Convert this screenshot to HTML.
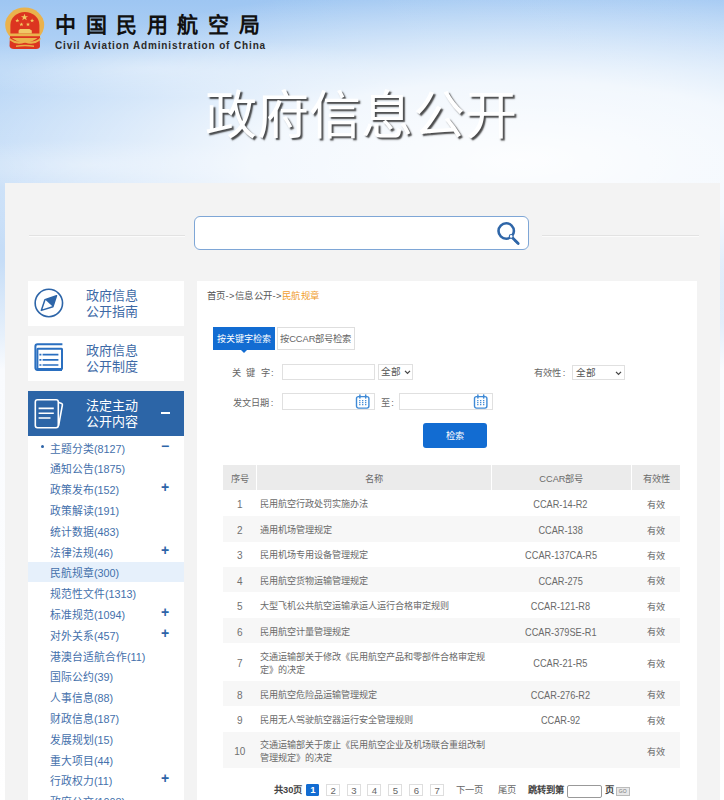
<!DOCTYPE html>
<html lang="zh-CN">
<head>
<meta charset="utf-8">
<style>
*{margin:0;padding:0;box-sizing:border-box}
html,body{width:724px;height:800px;overflow:hidden}
body{position:relative;font-family:"Liberation Sans",sans-serif;color:#555;
background:
 radial-gradient(ellipse 600px 175px at 520px 160px, rgba(255,255,255,0.96) 0%, rgba(255,255,255,0.8) 45%, rgba(255,255,255,0) 100%),
 radial-gradient(ellipse 260px 30px at 150px 68px, rgba(255,255,255,0.35) 0%, rgba(255,255,255,0) 100%),
 radial-gradient(ellipse 200px 25px at 90px 165px, rgba(255,255,255,0.3) 0%, rgba(255,255,255,0) 100%),
 linear-gradient(to right, rgba(255,255,255,0) 0%, rgba(255,255,255,0) 30%, rgba(255,255,255,0.08) 100%),
 linear-gradient(to bottom, #9ec6f2 0px, #b8d6f6 70px, #c2dbf7 183px, #c6ddf7 260px, #e6f0fb 335px, #f9fbfe 370px, #ffffff 800px);}
.abs{position:absolute}
#cn{left:55px;top:10px;font-size:21px;font-weight:bold;color:#111;letter-spacing:9.6px;line-height:30px;white-space:nowrap}
#en{left:55px;top:38.5px;font-size:10px;font-weight:bold;color:#2a2a2a;letter-spacing:0.86px;line-height:14px;white-space:nowrap}
#bigtitle{left:205px;top:80.5px;font-size:52px;font-weight:300;color:#fff;line-height:70px;white-space:nowrap;
 text-shadow:1.5px 2px 1.5px rgba(30,30,30,0.8)}
#wrap{left:5px;top:183px;width:714.6px;height:640px;background:#f3f3f3}
.hline{height:1px;background:#e2e2e2;box-shadow:0 1px 0 #fbfbfb}
#search{left:194px;top:215.8px;width:334.5px;height:34px;border:1.3px solid #7ea6d6;border-radius:6px;background:#fff}
.side{left:28px;width:156px;height:45px;background:#fff}
.side .t{position:absolute;left:58px;top:7.3px;font-size:13px;line-height:15.6px;color:#3d69a6;white-space:nowrap}
#side3{background:#2c65a7}
#side3 .t{color:#fff}
#list{left:28px;top:436px;width:156px;height:380px;background:#fff}
.li{position:absolute;left:22px;height:20.8px;line-height:25px;font-size:10.8px;color:#4470ab;white-space:nowrap}
.pl{position:absolute;left:133px;font-size:14px;font-weight:bold;color:#2d64a8;line-height:19.2px}
#hl{position:absolute;left:0;top:125.5px;width:156px;height:20.8px;background:#e6f0fb}
#main{left:196.6px;top:281px;width:500.6px;height:540px;background:#fff}
#crumb{left:206.6px;top:289px;font-size:9.4px;letter-spacing:0.4px;line-height:13px;color:#555;white-space:nowrap}
#tab1{left:212.7px;top:327px;width:62.6px;height:22.8px;background:#126cd2;color:#fff;font-size:9px;line-height:25.5px;text-align:center;white-space:nowrap}
#tab1arr{left:241.3px;top:349.8px;width:0;height:0;border-left:3px solid transparent;border-right:3px solid transparent;border-top:3px solid #126cd2}
#tab2{left:276.8px;top:327px;width:78px;height:22.8px;border:1px solid #dedede;color:#666;font-size:9.3px;line-height:23.5px;text-align:center;white-space:nowrap}
.lbl{font-size:9.2px;line-height:14px;color:#666;white-space:nowrap}
.inp{border:1px solid #e0e0e0;background:#fff}
.sel{font-size:9.6px;line-height:14px;color:#555;padding-left:2.5px}
#btn{left:423.4px;top:422.7px;width:63.8px;height:25px;border-radius:3px;background:#126cd2;color:#fff;font-size:9.2px;line-height:26.5px;text-align:center}
#thead{left:223.3px;top:464.7px;width:457.2px;height:25.7px;background:#ebebeb;font-size:9.2px;color:#6a6a6a;line-height:28.6px}
#thead>div,.tr>div{position:absolute;top:0;height:100%;text-align:center}
#thead .c1,#thead .c2,#thead .c3{border-left:1px solid #fff}
.c0{left:0;width:32.8px}.c1{left:32.8px;width:235px}.c2{left:267.8px;width:139.6px}.c3{left:407.4px;width:49.8px}
.tr{left:223.3px;width:457.2px;font-size:9.1px;color:#6a6a6a}
.tr>div{display:flex;align-items:center;justify-content:center;padding-top:3px}
.tr>.c0{font-size:10px;color:#707070}
.tr>.c2{font-size:11px;color:#6a6a6a;padding-top:2px}
.cc{display:inline-block;transform:scaleX(0.835)}
.tr>.c3{padding-top:1.5px}
.tr>.c1{justify-content:flex-start;text-align:left;padding-left:4px;padding-right:4px;line-height:12.8px}
.pg{font-size:9.3px;line-height:14px;color:#666;white-space:nowrap}
.pbox{top:783.9px;width:14px;height:12.6px;border:1px solid #dedede;font-size:9.6px;line-height:11.6px;text-align:center;color:#666}
.pbox.cur{background:#126cd2;border-color:#126cd2;color:#fff;font-weight:bold;width:13px;top:784.4px;height:11.2px;line-height:10.6px;border-radius:1px}
</style>
</head>
<body>
<!-- emblem -->
<svg class="abs" id="emblem" style="left:0;top:0;width:50px;height:50px" viewBox="0 0 50 50">
 <path d="M10 36 L9.5 46 Q10 49 14 49 L36 49 Q40 49 40 46 L39.5 36 Z" fill="#dc3520"/>
 <ellipse cx="24.7" cy="25" rx="19.5" ry="17.5" fill="#eab24c"/>
 <path d="M10.4 25 A14.5 13 0 0 1 39.4 25 L39.4 34.5 L10.4 34.5 Z" fill="#dc3520"/>
 <path d="M18.6 33.5 L18.6 30.5 L20 29 L29.5 29 L31.8 30.5 L31.8 33.5 Z" fill="#f0c868"/>
 <rect x="10" y="33.5" width="30" height="2.8" fill="#eab24c"/>
 <path d="M10 36.2 L40 36.2 L40 38 L10 38 Z" fill="#dc3520"/>
 <path d="M9 37.5 Q17 44 25 40 Q33 44 41 37.5 L40 40.5 Q33 46 25 42.5 Q17 46 10 40.5 Z" fill="#eab24c"/>
 <path d="M16 45.5 Q25 44 34 45.5 L34 47 Q25 45.5 16 47 Z" fill="#e9b048"/>
 <path d="M24.5 13.8 l0.95 2.4 h2.6 l-2.1 1.6 0.8 2.5 -2.25 -1.55 -2.25 1.55 0.8 -2.5 -2.1 -1.6 h2.6z" fill="#f3c860"/>
 <path d="M17.3 18.6 l0.6 1.4 h1.4 l-1.1 0.9 0.45 1.45 -1.35 -0.9 -1.35 0.9 0.45 -1.45 -1.1 -0.9 h1.4z" fill="#f3c860"/>
 <path d="M32.1 18.6 l0.6 1.4 h1.4 l-1.1 0.9 0.45 1.45 -1.35 -0.9 -1.35 0.9 0.45 -1.45 -1.1 -0.9 h1.4z" fill="#f3c860"/>
 <path d="M21.4 22.4 l0.6 1.4 h1.4 l-1.1 0.9 0.45 1.45 -1.35 -0.9 -1.35 0.9 0.45 -1.45 -1.1 -0.9 h1.4z" fill="#f3c860"/>
 <path d="M28 22.4 l0.6 1.4 h1.4 l-1.1 0.9 0.45 1.45 -1.35 -0.9 -1.35 0.9 0.45 -1.45 -1.1 -0.9 h1.4z" fill="#f3c860"/>
</svg>
<div class="abs" id="cn">中国民用航空局</div>
<div class="abs" id="en">Civil Aviation Administration of China</div>
<div class="abs" id="bigtitle">政府信息公开</div>

<div class="abs" id="wrap"></div>
<div class="abs hline" style="left:29px;top:235px;width:156px"></div>
<div class="abs hline" style="left:541.5px;top:235px;width:157px"></div>
<div class="abs" id="search"></div>
<svg class="abs" style="left:494px;top:218px;width:30px;height:30px" viewBox="0 0 30 30">
 <circle cx="12.2" cy="13" r="7.7" stroke="#2f66a8" stroke-width="2.6" fill="none"/>
 <path d="M17.2 18.6 L24.2 25.4" stroke="#2f66a8" stroke-width="2.8" stroke-linecap="round"/>
 <path d="M20.5 23.5 l1.6 -1.6 M22 25 l1.6 -1.6" stroke="#2f66a8" stroke-width="1.6"/>
 <circle cx="17.2" cy="18.4" r="1.9" fill="#fff" stroke="#2f66a8" stroke-width="1.1"/>
</svg>

<!-- sidebar -->
<div class="abs side" style="top:281px">
 <svg style="position:absolute;left:5px;top:6px;width:32px;height:32px" viewBox="0 0 32 32">
  <circle cx="15.85" cy="16" r="13.7" stroke="#2d65a8" stroke-width="1.6" fill="none"/>
  <path d="M23.5 8.7 L12 12.6 L8.3 23.4 L19.9 19.7 Z" fill="none" stroke="#2d65a8" stroke-width="1.5" stroke-linejoin="round"/>
  <path d="M23.5 8.7 L12 12.6 L19.9 19.7 Z" fill="#2d65a8"/>
 </svg>
 <div class="t">政府信息<br>公开指南</div>
</div>
<div class="abs side" style="top:336px">
 <svg style="position:absolute;left:5px;top:6px;width:32px;height:32px" viewBox="0 0 32 32">
  <path d="M29.4 2.3 H4.5 Q2.4 2.3 2.4 4.5 V25.8 Q2.4 27.9 4.5 27.9 H29" fill="none" stroke="#2a6fc0" stroke-width="2"/>
  <rect x="4.4" y="6.8" width="24.6" height="20.2" rx="0.5" fill="none" stroke="#2a6fc0" stroke-width="2"/>
  <path d="M6.4 12.6 h2 M9.6 12.6 h15.8 M6.4 17.9 h2 M9.6 17.9 h15.8 M6.4 23 h2 M9.6 23 h15.8" stroke="#2a6fc0" stroke-width="1.7"/>
 </svg>
 <div class="t">政府信息<br>公开制度</div>
</div>
<div class="abs side" id="side3" style="top:391px">
 <svg style="position:absolute;left:5px;top:6px;width:32px;height:32px" viewBox="0 0 32 32">
  <rect x="2.3" y="2.7" width="23" height="28" rx="2.2" fill="none" stroke="#fff" stroke-width="1.6"/>
  <path d="M25.3 5.2 L28.6 6.4 Q29.6 6.8 29.4 7.8 L25.6 28.6" fill="none" stroke="#fff" stroke-width="1.6"/>
  <path d="M5.6 11.4 h15.2 M5.6 16.2 h15.2 M5.6 21 h11.9" stroke="#fff" stroke-width="1.6"/>
 </svg>
 <div class="t">法定主动<br>公开内容</div>
 <div style="position:absolute;left:133px;top:20.5px;width:8.6px;height:2px;background:#fff"></div>
</div>

<div class="abs" id="list">
 <div id="hl"></div>
 <div style="position:absolute;left:12.8px;top:9.3px;width:3.2px;height:3.2px;border-radius:50%;background:#2d64a8"></div>
 <div class="li" style="top:0.6px">主题分类(8127)</div>
 <div class="pl" style="top:0.6px">−</div>
 <div class="li" style="top:21.4px">通知公告(1875)</div>
 <div class="li" style="top:42.2px">政策发布(152)</div>
 <div class="pl" style="top:42.2px">+</div>
 <div class="li" style="top:63px">政策解读(191)</div>
 <div class="li" style="top:83.8px">统计数据(483)</div>
 <div class="li" style="top:104.6px">法律法规(46)</div>
 <div class="pl" style="top:104.6px">+</div>
 <div class="li" style="top:125.4px">民航规章(300)</div>
 <div class="li" style="top:146.2px">规范性文件(1313)</div>
 <div class="li" style="top:167px">标准规范(1094)</div>
 <div class="pl" style="top:167px">+</div>
 <div class="li" style="top:187.8px">对外关系(457)</div>
 <div class="pl" style="top:187.8px">+</div>
 <div class="li" style="top:208.6px">港澳台适航合作(11)</div>
 <div class="li" style="top:229.4px">国际公约(39)</div>
 <div class="li" style="top:250.2px">人事信息(88)</div>
 <div class="li" style="top:271px">财政信息(187)</div>
 <div class="li" style="top:291.8px">发展规划(15)</div>
 <div class="li" style="top:312.6px">重大项目(44)</div>
 <div class="li" style="top:333.4px">行政权力(11)</div>
 <div class="pl" style="top:333.4px">+</div>
 <div class="li" style="top:354.2px">政府公文(1008)</div>
</div>

<div class="abs" id="main"></div>
<div class="abs" id="crumb">首页-&gt;信息公开-&gt;<span style="color:#f0a030">民航规章</span></div>
<div class="abs" id="tab1">按关键字检索</div>
<div class="abs" id="tab1arr"></div>
<div class="abs" id="tab2">按CCAR部号检索</div>
<div class="abs lbl" style="left:231.9px;top:366px"><span style="letter-spacing:5.3px">关键</span>字<span style="margin-left:1.5px">:</span></div>
<div class="abs inp" style="left:281.6px;top:363.5px;width:93.4px;height:16px"></div>
<div class="abs inp sel" style="left:377.8px;top:363.5px;width:35px;height:16px">全部<svg viewBox="0 0 8 6" style="position:absolute;left:25px;top:5.5px;width:7px;height:5px"><path d="M1 1 L4 4 L7 1" stroke="#444" stroke-width="1.5" fill="none"/></svg></div>
<div class="abs lbl" style="left:534.3px;top:366px">有效性<span style="margin-left:1.5px">:</span></div>
<div class="abs inp sel" style="left:572.2px;top:364.7px;width:53px;height:15px">全部<svg viewBox="0 0 8 6" style="position:absolute;left:42px;top:5px;width:7px;height:5px"><path d="M1 1 L4 4 L7 1" stroke="#444" stroke-width="1.5" fill="none"/></svg></div>
<div class="abs lbl" style="left:233.3px;top:396px">发文日期<span style="margin-left:1.5px">:</span></div>
<div class="abs inp" style="left:281.6px;top:393px;width:93.4px;height:16.8px"></div>
<div class="abs lbl" style="left:380.8px;top:396px">至<span style="margin-left:1.5px">:</span></div>
<div class="abs inp" style="left:399px;top:393px;width:94px;height:16.8px"></div>
<svg class="abs" style="left:354.8px;top:394px;width:15px;height:15px" viewBox="0 0 15 15"><rect x="1.5" y="2.6" width="12.4" height="11.5" rx="2" fill="#fff" stroke="#3f8ad6" stroke-width="1.4"/><path d="M4.9 1 v3 M10.7 1 v3" stroke="#3f8ad6" stroke-width="1.5" stroke-linecap="round"/><path d="M4.8 6 v5.8 M7.7 6 v5.8 M10.7 6 v5.8" stroke="#3f8ad6" stroke-width="1.3" stroke-dasharray="1.3 0.7"/></svg>
<svg class="abs" style="left:472.7px;top:394px;width:15px;height:15px" viewBox="0 0 15 15"><rect x="1.5" y="2.6" width="12.4" height="11.5" rx="2" fill="#fff" stroke="#3f8ad6" stroke-width="1.4"/><path d="M4.9 1 v3 M10.7 1 v3" stroke="#3f8ad6" stroke-width="1.5" stroke-linecap="round"/><path d="M4.8 6 v5.8 M7.7 6 v5.8 M10.7 6 v5.8" stroke="#3f8ad6" stroke-width="1.3" stroke-dasharray="1.3 0.7"/></svg>
<div class="abs" id="btn">检索</div>
<div class="abs" id="thead"><div class="c0">序号</div><div class="c1">名称</div><div class="c2">CCAR部号</div><div class="c3">有效性</div></div>
<div class="abs tr" style="top:490.4px;height:25.6px;"><div class="c0">1</div><div class="c1">民用航空行政处罚实施办法</div><div class="c2"><span class="cc">CCAR-14-R2</span></div><div class="c3">有效</div></div>
<div class="abs tr" style="top:516px;height:25.6px;background:#f7f7f7;"><div class="c0">2</div><div class="c1">通用机场管理规定</div><div class="c2"><span class="cc">CCAR-138</span></div><div class="c3">有效</div></div>
<div class="abs tr" style="top:541.6px;height:25.4px;"><div class="c0">3</div><div class="c1">民用机场专用设备管理规定</div><div class="c2"><span class="cc">CCAR-137CA-R5</span></div><div class="c3">有效</div></div>
<div class="abs tr" style="top:567px;height:25.4px;background:#f7f7f7;"><div class="c0">4</div><div class="c1">民用航空货物运输管理规定</div><div class="c2"><span class="cc">CCAR-275</span></div><div class="c3">有效</div></div>
<div class="abs tr" style="top:592.4px;height:25.6px;"><div class="c0">5</div><div class="c1">大型飞机公共航空运输承运人运行合格审定规则</div><div class="c2"><span class="cc">CCAR-121-R8</span></div><div class="c3">有效</div></div>
<div class="abs tr" style="top:618px;height:25.3px;background:#f7f7f7;"><div class="c0">6</div><div class="c1">民用航空计量管理规定</div><div class="c2"><span class="cc">CCAR-379SE-R1</span></div><div class="c3">有效</div></div>
<div class="abs tr" style="top:643.3px;height:37.7px;"><div class="c0">7</div><div class="c1">交通运输部关于修改《民用航空产品和零部件合格审定规定》的决定</div><div class="c2"><span class="cc">CCAR-21-R5</span></div><div class="c3">有效</div></div>
<div class="abs tr" style="top:681px;height:25.4px;background:#f7f7f7;"><div class="c0">8</div><div class="c1">民用航空危险品运输管理规定</div><div class="c2"><span class="cc">CCAR-276-R2</span></div><div class="c3">有效</div></div>
<div class="abs tr" style="top:706.4px;height:25.6px;"><div class="c0">9</div><div class="c1">民用无人驾驶航空器运行安全管理规则</div><div class="c2"><span class="cc">CCAR-92</span></div><div class="c3">有效</div></div>
<div class="abs tr" style="top:732px;height:36.0px;background:#f7f7f7;"><div class="c0">10</div><div class="c1">交通运输部关于废止《民用航空企业及机场联合重组改制管理规定》的决定</div><div class="c2"></div><div class="c3">有效</div></div>
<div class="abs pg" style="left:274px;top:783px;font-weight:bold;color:#444">共30页</div>
<div class="abs pbox cur" style="left:306.4px">1</div>
<div class="abs pbox" style="left:326.2px">2</div>
<div class="abs pbox" style="left:346.8px">3</div>
<div class="abs pbox" style="left:367.4px">4</div>
<div class="abs pbox" style="left:388.4px">5</div>
<div class="abs pbox" style="left:409.4px">6</div>
<div class="abs pbox" style="left:430.2px">7</div>
<div class="abs pg" style="left:455.5px;top:783px">下一页</div>
<div class="abs pg" style="left:497.5px;top:783px">尾页</div>
<div class="abs pg" style="left:528px;top:783px;font-weight:bold;color:#444">跳转到第</div>
<div class="abs" style="left:566.6px;top:784.8px;width:35.4px;height:12.8px;border:1px solid #999;border-radius:2px;background:#fff"></div>
<div class="abs pg" style="left:605px;top:783px;font-weight:bold;color:#444">页</div>
<div class="abs" style="left:615.7px;top:786.6px;width:14px;height:9.2px;border:1px solid #bbb;background:#e8e8e8;font-size:5px;line-height:7.2px;text-align:center;color:#777">GO</div>
</body>
</html>
